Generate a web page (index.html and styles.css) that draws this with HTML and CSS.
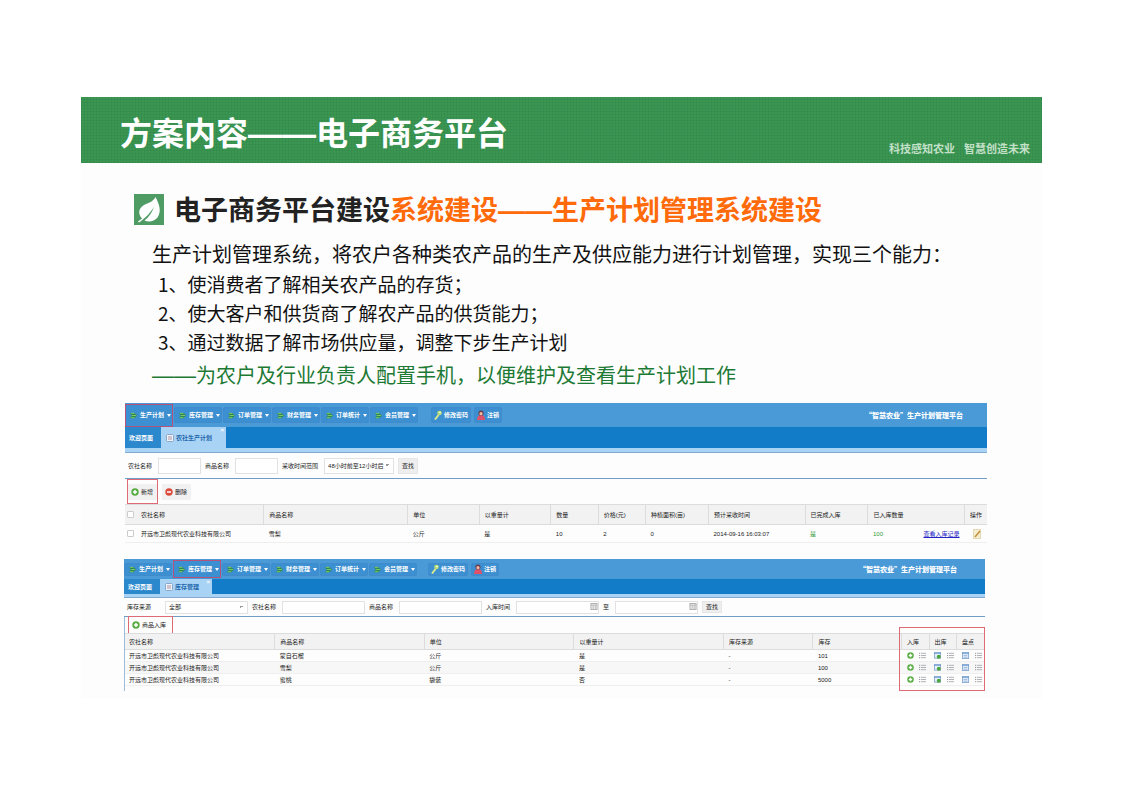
FILE: index.html
```html
<!DOCTYPE html>
<html lang="zh-CN">
<head>
<meta charset="utf-8">
<title>方案内容——电子商务平台</title>
<link rel="stylesheet" href="styles.css">
</head>
<body>
<svg class="sprite" aria-hidden="true">
  <symbol id="i-mod" viewBox="0 0 8 8"><path d="M0 1h5l3 3-3 3H0l2-3z" fill="#2a8a55"/><path d="M1 1.500h4M2 4h5M1 6.500h4" stroke="#8fd06a" stroke-width="1"/></symbol>
  <symbol id="i-key" viewBox="0 0 8 10"><path d="M1 9.500L4.500 5" stroke="#d9e88a" stroke-width="2"/><circle cx="5.500" cy="3" r="2.300" fill="#b9df74"/><circle cx="6" cy="2.500" r=".8" fill="#fff"/></symbol>
  <symbol id="i-user" viewBox="0 0 8 10"><path d="M0 10q0-5 4-5t4 5z" fill="#e0526a"/><circle cx="4" cy="3" r="2.600" fill="#6b3b4a"/><circle cx="4" cy="3.700" r="1.600" fill="#f2b9a0"/></symbol>
  <symbol id="i-add" viewBox="0 0 8 8"><circle cx="4" cy="4" r="3.700" fill="#57ad42"/><path d="M4 2v4M2 4h4" stroke="#fff" stroke-width="1.500"/></symbol>
  <symbol id="i-del" viewBox="0 0 8 8"><circle cx="4" cy="4" r="3.700" fill="#dc4a3c"/><path d="M2 4h4" stroke="#fff" stroke-width="1.500"/></symbol>
  <symbol id="i-page" viewBox="0 0 8 8"><rect x=".5" y=".5" width="7" height="7" rx="1" fill="#eef4fb" stroke="#8aa6c8"/><path d="M2 3h4M2 5h4" stroke="#b08f9d"/></symbol>
  <symbol id="i-list" viewBox="0 0 8 8"><path d="M0 1.500h1M0 4h1M0 6.500h1" stroke="#777"/><path d="M2 1.500h6M2 4h6M2 6.500h6" stroke="#a5a9ae"/></symbol>
  <symbol id="i-out" viewBox="0 0 8 8"><rect x=".5" y=".5" width="7" height="6.500" fill="#e6f0fa" stroke="#86a9d2"/><path d="M0 1.500h8" stroke="#6a98cf"/><circle cx="5.500" cy="5.500" r="2.300" fill="#4da53d"/></symbol>
  <symbol id="i-check" viewBox="0 0 8 8"><rect x=".5" y=".5" width="7" height="7" fill="#dce9f7" stroke="#86a9d2"/><path d="M0 1.500h8" stroke="#6a98cf"/><path d="M2 4h4M2 6h4" stroke="#9db9da"/></symbol>
  <symbol id="i-cal" viewBox="0 0 8 8"><rect x=".5" y=".5" width="7" height="7" fill="#eee" stroke="#a9a9a9"/><path d="M0 2.500h8M3 2v6M5.500 2v6" stroke="#b9b9b9"/></symbol>
  <symbol id="i-edit" viewBox="0 0 8 10"><rect x=".5" y=".5" width="7" height="9" fill="#f5edcf" stroke="#e3d8b4"/><path d="M2 8l5-6" stroke="#c2913c" stroke-width="1.500"/></symbol>
</svg>

<main class="slide">
  <header class="banner">
    <h1>方案内容<span class="dash">——</span>电子商务平台</h1>
    <p class="slogan"><span>科技感知农业</span><span>智慧创造未来</span></p>
  </header>

  <section class="intro">
    <h2>
      <svg class="leaf" viewBox="0 0 30 31" aria-hidden="true"><rect width="30" height="31" fill="#4e9b63"/><path d="M21.500 3C25 10 28 17 23.500 23.500 20 28 14 28 10.500 26.500 15 23 18 18.500 20 13 16 19 12 23.500 5 28.500L4 27.500 8 24.500C3 19 5 13 12 10 16 8.500 19.500 7 21.500 3z" fill="#fff"/></svg>
      <span>电子商务平台建设<em>系统建设<span class="dash">——</span>生产计划管理系统建设</em></span>
    </h2>
    <p>生产计划管理系统，将农户各种类农产品的生产及供应能力进行计划管理，实现三个能力：</p>
    <ul>
      <li>1、使消费者了解相关农产品的存货；</li>
      <li>2、使大客户和供货商了解农产品的供货能力；</li>
      <li>3、通过数据了解市场供应量，调整下步生产计划</li>
    </ul>
    <p class="note"><span class="dash">——</span>为农户及行业负责人配置手机，以便维护及查看生产计划工作</p>
  </section>

  <section class="app plan">
    <div class="topbar">
      <nav>
        <button class="marked"><svg><use href="#i-mod"/></svg>生产计划<i></i></button>
        <button><svg><use href="#i-mod"/></svg>库存管理<i></i></button>
        <button><svg><use href="#i-mod"/></svg>订单管理<i></i></button>
        <button><svg><use href="#i-mod"/></svg>财务管理<i></i></button>
        <button><svg><use href="#i-mod"/></svg>订单统计<i></i></button>
        <button><svg><use href="#i-mod"/></svg>会员管理<i></i></button>
      </nav>
      <div class="account">
        <button><svg><use href="#i-key"/></svg>修改密码</button>
        <button><svg><use href="#i-user"/></svg>注销</button>
      </div>
      <strong>“智慧农业”生产计划管理平台</strong>
    </div>
    <div class="tabs">
      <button>欢迎页面</button>
      <button class="active"><svg><use href="#i-page"/></svg>农社生产计划<b>×</b></button>
    </div>
    <form class="filter">
      <label for="a1">农社名称</label><input id="a1" type="text">
      <label for="a2">商品名称</label><input id="a2" type="text">
      <label for="a3">采收时间范围</label>
      <select id="a3"><option>48小时前至12小时后</option></select>
      <button type="button">查找</button>
    </form>
    <div class="tools">
      <div class="frame"><button><svg><use href="#i-add"/></svg>新增</button></div>
      <button><svg><use href="#i-del"/></svg>删除</button>
    </div>
    <table>
      <colgroup><col class="w139"><col class="w144"><col class="w72"><col class="w72"><col class="w48"><col class="w48"><col class="w63"><col class="w96"><col class="w63"><col class="w96"><col></colgroup>
      <thead>
        <tr><th><input type="checkbox" aria-label="全选">农社名称</th><th>商品名称</th><th>单位</th><th>以重量计</th><th>数量</th><th>价格(元)</th><th>种植面积(亩)</th><th>预计采收时间</th><th>已完成入库</th><th>已入库数量</th><th>操作</th></tr>
      </thead>
      <tbody>
        <tr><td><input type="checkbox" aria-label="选择">开远市卫彪现代农业科技有限公司</td><td>雪梨</td><td>公斤</td><td>是</td><td>10</td><td>2</td><td>0</td><td>2014-09-16 16:03:07</td><td class="ok">是</td><td><div class="split"><span class="ok">100</span><a href="#">查看入库记录</a></div></td><td><svg class="edit"><use href="#i-edit"/></svg></td></tr>
      </tbody>
    </table>
  </section>

  <section class="app stock">
    <div class="topbar">
      <nav>
        <button><svg><use href="#i-mod"/></svg>生产计划<i></i></button>
        <button class="marked"><svg><use href="#i-mod"/></svg>库存管理<i></i></button>
        <button><svg><use href="#i-mod"/></svg>订单管理<i></i></button>
        <button><svg><use href="#i-mod"/></svg>财务管理<i></i></button>
        <button><svg><use href="#i-mod"/></svg>订单统计<i></i></button>
        <button><svg><use href="#i-mod"/></svg>会员管理<i></i></button>
      </nav>
      <div class="account">
        <button><svg><use href="#i-key"/></svg>修改密码</button>
        <button><svg><use href="#i-user"/></svg>注销</button>
      </div>
      <strong>“智慧农业”生产计划管理平台</strong>
    </div>
    <div class="tabs">
      <button>欢迎页面</button>
      <button class="active"><svg><use href="#i-page"/></svg>库存管理<b>×</b></button>
    </div>
    <form class="filter">
      <label for="b1">库存来源</label>
      <select id="b1"><option>全部</option></select>
      <label for="b2">农社名称</label><input id="b2" type="text">
      <label for="b3">商品名称</label><input id="b3" type="text">
      <label for="b4">入库时间</label>
      <span class="date"><input id="b4" type="text"><svg><use href="#i-cal"/></svg></span>
      <label for="b5">至</label>
      <span class="date"><input id="b5" type="text"><svg><use href="#i-cal"/></svg></span>
      <button type="button">查找</button>
    </form>
    <div class="tools">
      <div class="frame"><button><svg><use href="#i-add"/></svg>商品入库</button></div>
    </div>
    <div class="grid">
      <table>
        <colgroup><col class="w150"><col class="w150"><col class="w150"><col class="w150"><col class="w90"><col class="w87"><col class="w30"><col class="w27"><col></colgroup>
        <thead>
          <tr><th>农社名称</th><th>商品名称</th><th>单位</th><th>以重量计</th><th>库存来源</th><th>库存</th><th>入库</th><th>出库</th><th>盘点</th></tr>
        </thead>
        <tbody>
          <tr><td>开远市卫彪现代农业科技有限公司</td><td>蒙自石榴</td><td>公斤</td><td>是</td><td>-</td><td>101</td><td><div class="ops"><svg><use href="#i-add"/></svg><svg><use href="#i-list"/></svg></div></td><td><div class="ops"><svg><use href="#i-out"/></svg><svg><use href="#i-list"/></svg></div></td><td><div class="ops"><svg><use href="#i-check"/></svg><svg><use href="#i-list"/></svg></div></td></tr>
          <tr><td>开远市卫彪现代农业科技有限公司</td><td>雪梨</td><td>公斤</td><td>是</td><td>-</td><td>100</td><td><div class="ops"><svg><use href="#i-add"/></svg><svg><use href="#i-list"/></svg></div></td><td><div class="ops"><svg><use href="#i-out"/></svg><svg><use href="#i-list"/></svg></div></td><td><div class="ops"><svg><use href="#i-check"/></svg><svg><use href="#i-list"/></svg></div></td></tr>
          <tr><td>开远市卫彪现代农业科技有限公司</td><td>蜜桃</td><td>袋装</td><td>否</td><td>-</td><td>5000</td><td><div class="ops"><svg><use href="#i-add"/></svg><svg><use href="#i-list"/></svg></div></td><td><div class="ops"><svg><use href="#i-out"/></svg><svg><use href="#i-list"/></svg></div></td><td><div class="ops"><svg><use href="#i-check"/></svg><svg><use href="#i-list"/></svg></div></td></tr>
        </tbody>
      </table>
      <div class="callout"></div>
    </div>
  </section>
</main>
</body>
</html>
```
FILE: styles.css
```css
* { box-sizing: border-box; }

body {
  margin: 0;
  padding: 97px 81px 0;
  background: #fff;
  color: #111;
  font-family: "Liberation Sans", "Noto Sans CJK SC", sans-serif;
}

h1, h2, p, ul { margin: 0; padding: 0; }
ul { list-style: none; }
button, input, select { font: inherit; color: inherit; margin: 0; }
button { white-space: nowrap; }
svg { flex: none; display: block; }
.sprite { position: absolute; width: 0; height: 0; }

.slide {
  background: #fdfdfd;
  padding-bottom: 8px;
}

/* Banner */
.banner {
  display: flex;
  justify-content: space-between;
  height: 66px;
  padding: 0 12px 0 39px;
  color: #fff;
  background:
    repeating-linear-gradient(90deg, rgba(20, 90, 50, .1) 0 1px, transparent 1px 3px),
    repeating-linear-gradient(0deg, rgba(20, 90, 50, .1) 0 1px, transparent 1px 3px),
    #3b9652;
}
.banner h1 {
  font-family: "Noto Sans CJK SC", sans-serif;
  font-size: 32px;
  line-height: 68px;
  font-weight: 700;
}
.dash { font-family: "Liberation Sans", sans-serif; }
.banner .dash { font-size: 34px; line-height: 32px; }
.slogan {
  display: flex;
  gap: 9px;
  align-self: flex-end;
  font-size: 11px;
  line-height: 28px;
  font-weight: 700;
  color: #c3e0c8;
}

/* Intro text */
.intro { padding: 31px 40px 0 53px; font-family: "Noto Sans CJK SC", sans-serif; }
.intro h2 {
  display: flex;
  align-items: center;
  gap: 10px;
  height: 31px;
  font-size: 27px;
  line-height: 27px;
  color: #222;
}
.intro em { font-style: normal; color: #ff6a0a; }
.leaf { width: 30px; height: 31px; }
.intro p { margin: 13px 0 0 18px; font-size: 20px; line-height: 31px; }
.intro li { padding-left: 24px; font-size: 19px; line-height: 29px; }
.intro .note { margin-top: 1px; line-height: 36px; color: #1d7a35; }
.note .dash { font-size: 22px; line-height: 20px; }

/* Application windows */
.app { margin: 10px 55px 0 44px; font-size: 6px; line-height: 10px; color: #222; }
.topbar {
  display: flex;
  align-items: center;
  height: 24px;
  padding-right: 24px;
  color: #fff;
  font-weight: 700;
  background: #4a9ad8;
}
.topbar nav { display: flex; align-items: center; gap: 1px; }
.topbar button {
  display: flex;
  align-items: center;
  gap: 3px;
  height: 16px;
  padding: 0 3px;
  border: 1px solid #3f8bcb;
  border-radius: 2px;
  background: #3c8fd0;
}
.topbar nav button { width: 48px; padding: 0 2px 0 4px; }
.topbar nav svg { width: 7px; height: 7px; }
.topbar i {
  border: 2px solid transparent;
  border-top: 3px solid #fff;
  border-bottom: 0;
}
.topbar .marked { height: 23px; border-color: #b5527c; border-radius: 0; }
.account { display: flex; gap: 3px; margin-left: 13px; }
.topbar .account button { gap: 2px; padding: 0 2px; }
.account svg { width: 8px; height: 10px; }
.topbar strong { margin-left: auto; font-family: "Noto Sans CJK SC", sans-serif; font-size: 7px; }

.tabs {
  display: flex;
  height: 26px;
  background: #137cc9;
  border-bottom: 1px solid #83a9cf;
  box-shadow: inset 0 -4px #a9d3f5;
  padding-bottom: 4px;
  color: #fff;
  font-weight: 700;
}
.tabs button {
  display: flex;
  align-items: center;
  gap: 2px;
  width: 36px;
  padding: 0 4px;
  border: 0;
  background: #2c88cd;
}
.tabs .active { position: relative; width: 65px; padding: 0 5px; background: #a9d3f5; color: #1f67ab; }
.tabs svg { width: 8px; height: 8px; }
.tabs b { position: absolute; right: 2px; top: 0; line-height: 6px; color: #fff; }

.filter {
  display: flex;
  align-items: center;
  height: 26px;
  padding-left: 3px;
  border-bottom: 1px solid #6f9dc6;
}
.filter input, .filter select {
  width: 43px;
  height: 16px;
  margin: 0 4px 0 6px;
  padding: 0 3px;
  border: 1px solid #e2e2e2;
  background: #fff;
}
.filter select {
  width: 70px;
  appearance: none;
  background:
    linear-gradient(135deg, #999 50%, transparent 50%) right 4px center / 3px 3px no-repeat,
    #fff;
}
.filter button { height: 16px; padding: 0 3px; border: 1px solid #e6e6e6; background: #eee; }
.date { position: relative; }
.date svg { position: absolute; right: 5px; top: 2px; width: 8px; height: 7px; }

.tools { display: flex; align-items: center; gap: 4px; height: 25px; padding-left: 2px; }
.tools .frame { display: flex; align-items: center; height: 25px; border: 1px solid #de6a76; }
.tools button {
  display: flex;
  align-items: center;
  gap: 2px;
  height: 16px;
  padding: 0 4px 0 3px;
  border: 0;
  background: #f1f1f1;
}
.tools svg { width: 8px; height: 8px; }

table { width: 100%; table-layout: fixed; border-collapse: collapse; }
th, td { padding: 0 0 0 5px; text-align: left; font-weight: 400; white-space: nowrap; }
th { height: 20px; background: #f2f2f2; border: solid #dcdcdc; border-width: 1px 0 1px 1px; }
td { height: 18px; border-bottom: 1px solid #efefef; }
th:first-child { border-left: 0; }
th input, td input {
  appearance: none;
  width: 7px;
  height: 7px;
  border: 1px solid #ccc;
  border-radius: 1px;
  background: #fff;
  vertical-align: middle;
}
.plan { min-height: 146px; }
.plan th:first-child, .plan td:first-child { padding-left: 2px; }
.plan th input, .plan td input { margin-right: 7px; }
.ok { color: #2f9b36; }
.split { display: flex; justify-content: space-between; padding-right: 5px; }
.split a { color: #2323c4; }
.edit { width: 8px; height: 10px; margin-left: 3px; }

.w139 { width: 16.1%; }
.w144 { width: 16.7%; }
.w72 { width: 8.3%; }
.w48 { width: 5.5%; }
.w63 { width: 7.3%; }
.w96 { width: 11.2%; }
.w150 { width: 17.4%; }
.w90 { width: 10.4%; }
.w87 { width: 10.3%; }
.w30 { width: 3.2%; }
.w27 { width: 3.2%; }

/* Stock window: denser rows */
.stock { margin: 10px 57px 0 43px; }
.stock .topbar { height: 20px; padding-right: 28px; }
.stock .topbar button { height: 13px; }
.stock .topbar .marked { height: 18px; }
.stock .account { margin-left: 11px; }
.stock .tabs { height: 19px; padding-bottom: 3px; box-shadow: inset 0 -3px #a9d3f5; }
.stock .active { width: 52px; }
.stock .filter { height: 19px; }
.stock .filter input, .stock .filter select { width: 83px; height: 13px; }
.stock .filter select { margin-left: 14px; }
.stock .filter button { height: 12px; }
.stock .tools { height: 16px; padding-left: 3px; border-left: 1px solid #9dbcdb; }
.stock .frame { height: 18px; }
.stock .tools button { height: 12px; background: none; padding-right: 6px; }
.grid { position: relative; padding-bottom: 5px; border-left: 1px solid #9dbcdb; }
.stock th { height: 16px; }
.stock th:first-child, .stock td:first-child { padding-left: 4px; }
.stock td { height: 12px; line-height: 8px; }
.stock tbody tr:nth-child(even) { background: #f7f7f7; }
.ops { display: flex; justify-content: space-between; padding-right: 3px; }
.ops svg { width: 7px; height: 7px; }
.callout {
  position: absolute;
  top: -6px;
  right: 0;
  bottom: 0;
  width: 10%;
  border: 1px solid #de6a76;
}
```
